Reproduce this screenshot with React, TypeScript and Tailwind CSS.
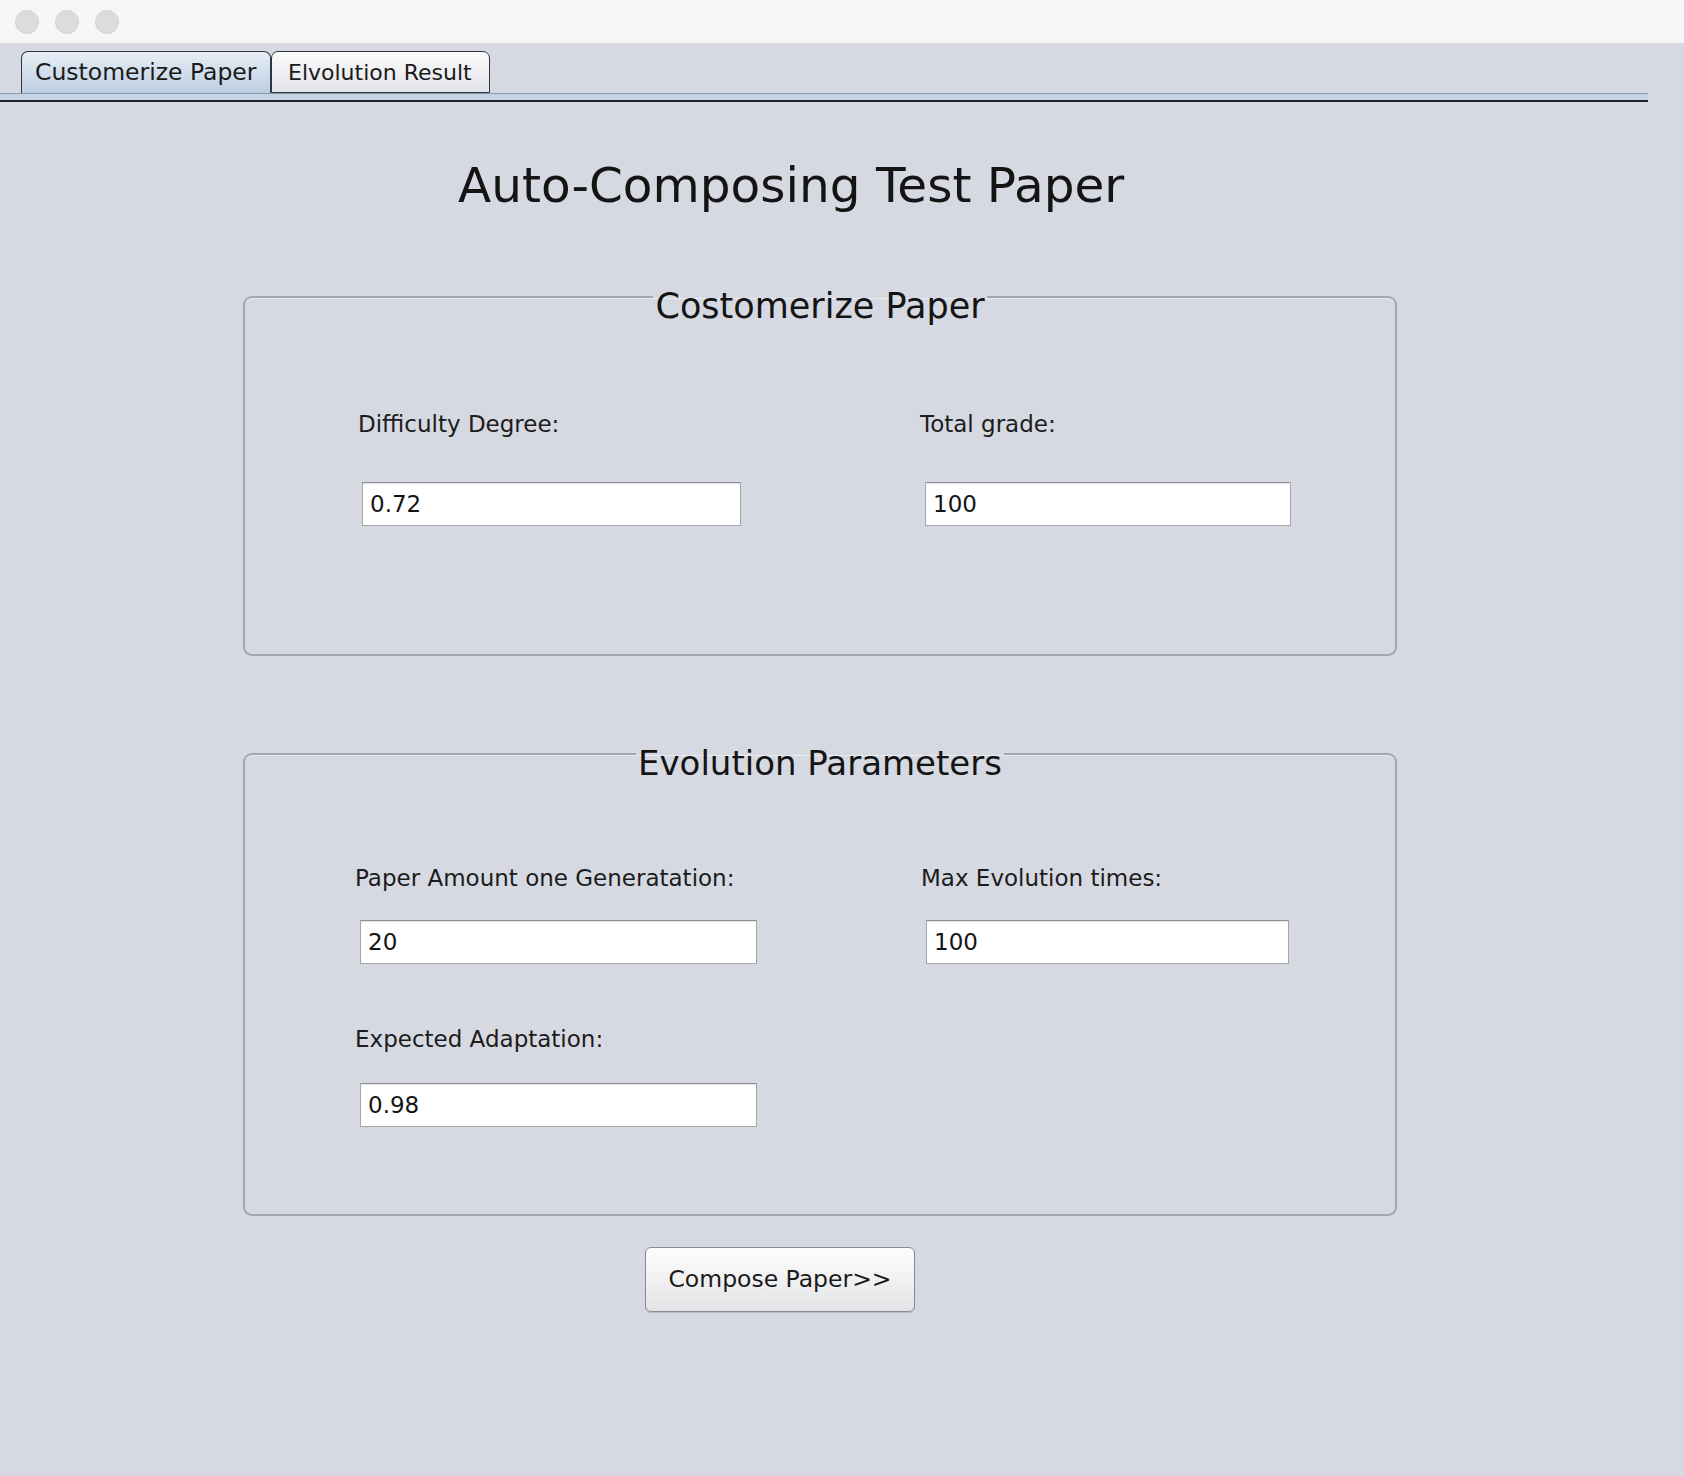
import React from "react";

const font = { fontFamily: '"DejaVu Sans", "Liberation Sans", sans-serif' };

function Field({ value, width }: { value: string; width: string }) {
  return (
    <div
      className={`h-[44px] ${width} border border-[#a4a6aa] border-t-[#8e9095] bg-white flex items-center pl-[7px] text-[23px] text-[#141414] shadow-[inset_0_1px_1px_rgba(0,0,0,0.12)]`}
    >
      {value}
    </div>
  );
}

function Label({ children }: { children: React.ReactNode }) {
  return <div className="text-[23px] leading-[26px] text-[#1c1c1c]">{children}</div>;
}

export default function App() {
  return (
    <div className="min-h-[1476px] w-[1684px] bg-[#d6d9e1] text-[#111]" style={font}>
      {/* title bar */}
      <div className="h-[43px] bg-[#f6f6f6] flex items-center pl-[15px] gap-[16px]">
        <div className="w-[24px] h-[24px] rounded-full bg-[#dcdcdc] border border-[#d2d2d2]" />
        <div className="w-[24px] h-[24px] rounded-full bg-[#dcdcdc] border border-[#d2d2d2]" />
        <div className="w-[24px] h-[24px] rounded-full bg-[#dcdcdc] border border-[#d2d2d2]" />
      </div>

      {/* tabs */}
      <div className="flex pl-[21px] pt-[8px]">
        <div className="relative z-10 -mb-px h-[42px] w-[250px] rounded-t-[7px] border border-b-0 border-[#2e3440] bg-gradient-to-b from-[#e8eef6] to-[#bccee2] flex items-center pl-[13px] text-[23.5px] text-[#1a1a1a]">
          Customerize Paper
        </div>
        <div className="h-[42px] w-[219px] rounded-t-[7px] border border-[#2e3440] bg-gradient-to-b from-[#fbfbfc] to-[#e3e4e9] flex items-center pl-[16px] text-[22px] text-[#1a1a1a]">
          Elvolution Result
        </div>
      </div>
      <div className="w-[1648px] h-[9px] border-t border-[#8d96a3] bg-[#c4d4e7] border-b-2 border-b-[#1d2430]" />

      {/* heading */}
      <div className="pl-[458px] mt-[59px] text-[48.5px] leading-[48px] text-[#141414]">
        Auto-Composing Test Paper
      </div>

      {/* group 1 */}
      <fieldset className="ml-[243px] mt-[62px] w-[1154px] rounded-[9px] border-2 border-[#a3a7ae] pt-[88px] pb-[128px] shadow-[inset_0_1px_0_rgba(255,255,255,0.5)]">
        <legend className="mx-auto px-[2px] pt-[18px] text-[35px] leading-[34px] text-[#141414]">
          Costomerize Paper
        </legend>
        <div className="flex pl-[113px]">
          <div className="w-[562px]">
            <Label>Difficulty Degree:</Label>
            <div className="mt-[45px] ml-[4px]">
              <Field value="0.72" width="w-[379px]" />
            </div>
          </div>
          <div>
            <Label>Total grade:</Label>
            <div className="mt-[45px] ml-[5px]">
              <Field value="100" width="w-[366px]" />
            </div>
          </div>
        </div>
      </fieldset>

      {/* group 2 */}
      <fieldset className="ml-[243px] mt-[72px] w-[1154px] rounded-[9px] border-2 border-[#a3a7ae] pt-[85px] pb-[87px] shadow-[inset_0_1px_0_rgba(255,255,255,0.5)]">
        <legend className="mx-auto px-[2px] pt-[18px] text-[34px] leading-[34px] text-[#141414]">
          Evolution Parameters
        </legend>
        <div className="pl-[110px]">
          <div className="flex">
            <div className="w-[566px]">
              <Label>Paper Amount one Generatation:</Label>
              <div className="mt-[29px] ml-[5px]">
                <Field value="20" width="w-[397px]" />
              </div>
            </div>
            <div>
              <Label>Max Evolution times:</Label>
              <div className="mt-[29px] ml-[5px]">
                <Field value="100" width="w-[363px]" />
              </div>
            </div>
          </div>
          <div className="mt-[62px]">
            <Label>Expected Adaptation:</Label>
            <div className="mt-[31px] ml-[5px]">
              <Field value="0.98" width="w-[397px]" />
            </div>
          </div>
        </div>
      </fieldset>

      {/* button */}
      <div className="pl-[645px] mt-[31px]">
        <button className="h-[65px] w-[270px] rounded-[6px] border border-[#8c8c8e] bg-gradient-to-b from-[#fdfdfd] via-[#f1f1f2] to-[#e2e3e6] shadow-[0_1px_1px_rgba(0,0,0,0.15)] text-[23.5px] text-[#1a1a1a] flex items-center justify-center">
          Compose Paper&gt;&gt;
        </button>
      </div>
    </div>
  );
}
